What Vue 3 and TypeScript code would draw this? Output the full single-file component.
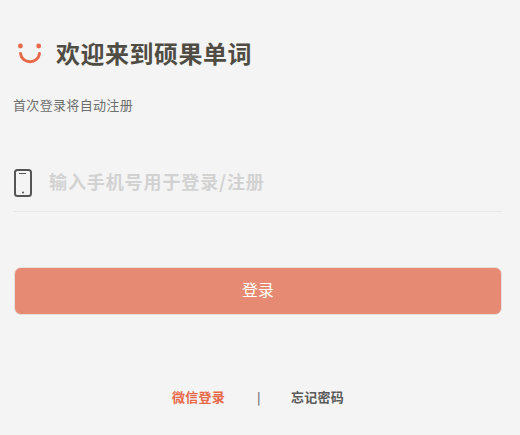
<script setup lang="ts">
const title: string = '欢迎来到硕果单词'
</script>

<template>
  <div class="page">
    <div class="head">
      <svg class="logo" width="26" height="24" viewBox="0 0 26 24">
        <circle cx="3.4" cy="5" r="2.4" fill="#e8694a" />
        <circle cx="21.7" cy="5" r="2.4" fill="#e8694a" />
        <path d="M3.5 12.5 C5 23.5 21 23.5 22.5 12.5" fill="none" stroke="#e8694a" stroke-width="3" stroke-linecap="round" />
      </svg>
      <h1 class="title">{{ title }}</h1>
    </div>
    <p class="sub">首次登录将自动注册</p>
    <div class="field">
      <svg class="phone" width="20" height="28" viewBox="0 0 20 28">
        <rect x="2" y="1" width="16" height="26" rx="2.5" fill="none" stroke="#555" stroke-width="2" />
        <path d="M6 4.5H13" stroke="#555" stroke-width="1" />
        <circle cx="10" cy="23.5" r="1" fill="#555" />
      </svg>
      <span class="placeholder">输入手机号用于登录/注册</span>
    </div>
    <button class="submit" type="button">登录</button>
    <div class="links">
      <span class="wechat">微信登录</span>
      <span class="sep">|</span>
      <span class="forgot">忘记密码</span>
    </div>
  </div>
</template>

<style>
html, body { margin: 0; background: #f4f4f4; }
</style>

<style scoped>
.page {
  width: 520px;
  height: 435px;
  box-sizing: border-box;
  padding: 0 18px 0 13px;
  overflow: hidden;
  background: #f4f4f4;
  font-family: "Noto Sans CJK SC", sans-serif;
}
.head {
  display: flex;
  align-items: center;
  gap: 13px;
  padding: 36px 0 0 4px;
  height: 34px;
}
.logo { display: block; }
.title {
  margin: 0;
  font-size: 24px;
  line-height: 34px;
  font-weight: 700;
  letter-spacing: 0.5px;
  color: #4f4c44;
}
.sub {
  margin: 25px 0 0;
  font-size: 13px;
  line-height: 19px;
  letter-spacing: 0.33px;
  color: #6e6e6e;
}
.field {
  display: flex;
  align-items: center;
  gap: 16px;
  height: 57px;
  margin-top: 41px;
  border-bottom: 1px solid #e8e8e8;
  box-sizing: border-box;
  padding-bottom: 4px;
}
.phone { display: block; margin-top: 4px; }
.placeholder {
  font-size: 18px;
  font-weight: 700;
  letter-spacing: 0.9px;
  color: #d2d2d2;
}
.submit {
  display: block;
  width: 488px;
  height: 48px;
  margin: 55px 0 0 1px;
  padding: 0 0 5px;
  border: 1px solid #e6dfda;
  border-radius: 7px;
  background: #e78a73;
  color: #fff;
  font-family: inherit;
  font-size: 16px;
}
.links {
  display: flex;
  align-items: center;
  margin-top: 71px;
  height: 20px;
  font-size: 13px;
  font-weight: 700;
  letter-spacing: 0.25px;
  padding-left: 159px;
}
.wechat { color: #e8694a; width: 54px; }
.sep { color: #777; font-weight: 700; margin-left: 31px; width: 34px; font-size: 12px; }
.forgot { color: #5a5a5a; }
</style>
